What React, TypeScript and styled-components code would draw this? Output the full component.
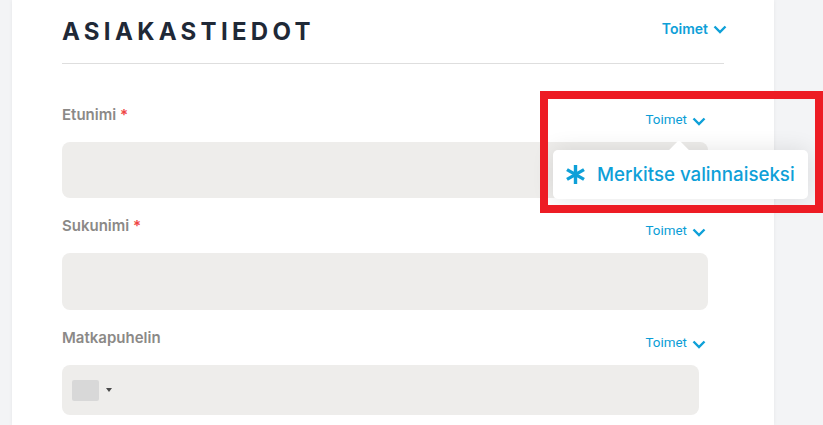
import React from "react";
import styled, { createGlobalStyle } from "styled-components";

const GlobalStyle = createGlobalStyle`
  html, body {
    margin: 0;
    padding: 0;
    height: 100%;
    overflow: hidden;
    background: #f3f4f6;
    font-family: "Inter", "Liberation Sans", sans-serif;
  }
`;

const Page = styled.div`
  position: relative;
  width: 823px;
  height: 425px;
  overflow: hidden;
  background: #f3f4f6;
`;

const Card = styled.div`
  margin-left: 12px;
  width: 762px;
  height: 425px;
  box-sizing: border-box;
  padding: 0 50px;
  background: #fff;
  box-shadow: 0 0 4px rgba(0, 0, 0, 0.06);
`;

const Header = styled.div`
  display: flex;
  justify-content: space-between;
  align-items: center;
  height: 64px;
  box-sizing: border-box;
  border-bottom: 1px solid #dedede;
`;

const Title = styled.h1`
  margin: 1px 0 0;
  font-size: 24px;
  line-height: 28px;
  font-weight: 700;
  letter-spacing: 4.3px;
  color: #1f2937;
`;

const HeaderAction = styled.div`
  display: flex;
  align-items: center;
  gap: 5px;
  margin: 0 -3px 6px 0;
  font-size: 14px;
  font-weight: 600;
  color: #0ea0d8;
`;

const Fields = styled.div`
  display: flex;
  flex-direction: column;
  gap: 13px;
  padding-top: 36px;
`;

const Field = styled.div`
  position: relative;
  display: flex;
  flex-direction: column;
`;

const FieldHead = styled.div`
  height: 42px;
  width: 644px;
  display: flex;
  justify-content: space-between;
  align-items: flex-start;
`;

const Label = styled.label`
  font-size: 15px;
  line-height: 30px;
  font-weight: 600;
  color: #8b8987;
`;

const Required = styled.span`
  color: #ef4444;
`;

const FieldAction = styled.div`
  display: flex;
  align-items: center;
  gap: 5px;
  height: 38px;
  font-family: "Roboto", "Liberation Sans", sans-serif;
  font-size: 13.4px;
  font-weight: 400;
  color: #0a9dd6;
`;

const Input = styled.div<{ $h: number; $w: number }>`
  height: ${(p) => p.$h}px;
  width: ${(p) => p.$w}px;
  box-sizing: border-box;
  background: #eeedeb;
  border-radius: 8px;
  display: flex;
  align-items: center;
  padding-left: 10px;
`;

const Flag = styled.span`
  width: 27px;
  height: 21px;
  border-radius: 2px;
  background: #d8d8d8;
`;

const FlagCaret = styled.span`
  margin-left: 7px;
  width: 0;
  height: 0;
  border-left: 3px solid transparent;
  border-right: 3px solid transparent;
  border-top: 4px solid #4a4a4a;
`;

const Popover = styled.div`
  position: absolute;
  left: 491px;
  top: 50px;
  width: 255px;
  height: 49px;
  box-sizing: border-box;
  padding-left: 13px;
  display: flex;
  align-items: center;
  background: #fff;
  border-radius: 5px;
  box-shadow: 0 0 22px rgba(0, 0, 0, 0.11);
  z-index: 2;

  &::before {
    content: "";
    position: absolute;
    left: 119px;
    top: -7px;
    width: 14px;
    height: 14px;
    background: #fff;
    transform: rotate(45deg);
    border-radius: 2px 0 0 0;
  }
`;

const PopoverItem = styled.div`
  position: relative;
  display: flex;
  align-items: center;
  gap: 12px;
  font-family: "Inter", "Liberation Sans", sans-serif;
  font-size: 18.7px;
  font-weight: 500;
  color: #0ea0d8;
  white-space: nowrap;
`;

const Highlight = styled.div`
  position: absolute;
  left: 540px;
  top: 91px;
  width: 283px;
  height: 122px;
  box-sizing: border-box;
  border: 8px solid #ed1c24;
  z-index: 3;
  pointer-events: none;
`;

const ChevronIcon = styled.svg<{ $drop: number }>`
  margin-top: ${(p) => p.$drop}px;
`;

const Chevron = ({ drop }: { drop: number }) => (
  <ChevronIcon $drop={drop} width="14" height="9" viewBox="0 0 14 9">
    <path d="M1.5 1.5 L7 7 L12.5 1.5" fill="none" stroke="#0ea0d8" strokeWidth="2.4" />
  </ChevronIcon>
);

const Star = () => (
  <svg width="19" height="19" viewBox="0 0 19 19">
    <path
      d="M9.5 0 V19 M1 4.6 L18 14.4 M18 4.6 L1 14.4"
      fill="none"
      stroke="#0ea0d8"
      strokeWidth="3.4"
    />
  </svg>
);

export default function App() {
  return (
    <Page>
      <GlobalStyle />
      <Card>
        <Header>
          <Title>ASIAKASTIEDOT</Title>
          <HeaderAction>
            Toimet <Chevron drop={2} />
          </HeaderAction>
        </Header>
        <Fields>
          <Field>
            <FieldHead>
              <Label>
                Etunimi <Required>*</Required>
              </Label>
              <FieldAction>
                Toimet <Chevron drop={4} />
              </FieldAction>
            </FieldHead>
            <Input $h={56} $w={646} />
            <Popover>
              <PopoverItem>
                <Star />
                Merkitse valinnaiseksi
              </PopoverItem>
            </Popover>
          </Field>
          <Field>
            <FieldHead>
              <Label>
                Sukunimi <Required>*</Required>
              </Label>
              <FieldAction>
                Toimet <Chevron drop={4} />
              </FieldAction>
            </FieldHead>
            <Input $h={57} $w={646} />
          </Field>
          <Field>
            <FieldHead>
              <Label>Matkapuhelin</Label>
              <FieldAction>
                Toimet <Chevron drop={4} />
              </FieldAction>
            </FieldHead>
            <Input $h={50} $w={637}>
              <Flag />
              <FlagCaret />
            </Input>
          </Field>
        </Fields>
      </Card>
      <Highlight />
    </Page>
  );
}
